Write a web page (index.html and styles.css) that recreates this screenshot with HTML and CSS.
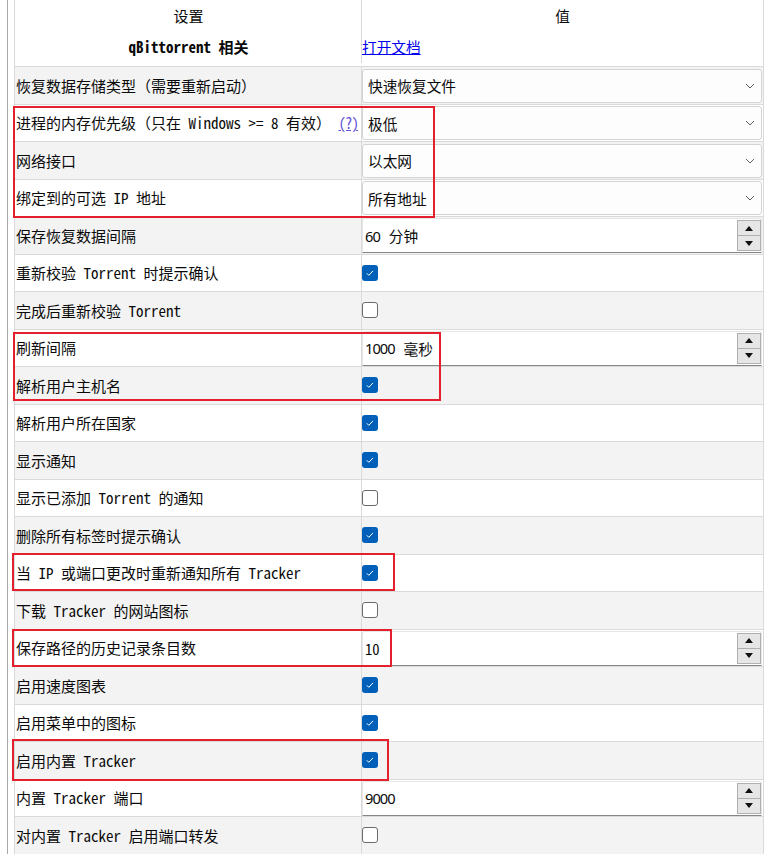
FILE: index.html
```html
<!DOCTYPE html>
<html lang="zh-CN">
  <head>
    <meta charset="UTF-8" />
    <title>高级设置</title>
    <link rel="stylesheet" href="styles.css">
  </head>
  <body>
    <div class="frame">
      <div class="grid">
        <div class="row head">
          <div class="cell key center">设置</div>
          <div class="cell val center">值</div>
        </div>
        <div class="row group">
          <div class="cell key center bold">qBittorrent 相关</div>
          <div class="cell val"><a href="#" class="doc">打开文档</a></div>
        </div>

        <div class="row alt">
          <div class="cell key">恢复数据存储类型（需要重新启动）</div>
          <div class="cell val"><div class="combo"><span>快速恢复文件</span><svg class="chev" width="10" height="6" viewBox="0 0 10 6"><path d="M1 1l4 4 4-4" /></svg></div></div>
        </div>
        <div class="row">
          <div class="cell key">进程的内存优先级（只在 Windows &gt;= 8 有效）&nbsp;<a href="#" class="help">(?)</a></div>
          <div class="cell val"><div class="combo"><span>极低</span><svg class="chev" width="10" height="6" viewBox="0 0 10 6"><path d="M1 1l4 4 4-4" /></svg></div></div>
        </div>
        <div class="row alt">
          <div class="cell key">网络接口</div>
          <div class="cell val"><div class="combo"><span>以太网</span><svg class="chev" width="10" height="6" viewBox="0 0 10 6"><path d="M1 1l4 4 4-4" /></svg></div></div>
        </div>
        <div class="row">
          <div class="cell key">绑定到的可选 IP 地址</div>
          <div class="cell val"><div class="combo"><span>所有地址</span><svg class="chev" width="10" height="6" viewBox="0 0 10 6"><path d="M1 1l4 4 4-4" /></svg></div></div>
        </div>
        <div class="row alt">
          <div class="cell key">保存恢复数据间隔</div>
          <div class="cell val">
            <div class="spin">
              <span class="num">60</span><span class="unit">分钟</span>
              <div class="arrows">
                <span class="btn"><svg width="8" height="5" viewBox="0 0 8 5"><path d="M0 5L4 0 8 5z" /></svg></span>
                <span class="btn"><svg width="8" height="5" viewBox="0 0 8 5"><path d="M0 0h8L4 5z" /></svg></span>
              </div>
            </div>
          </div>
        </div>
        <div class="row">
          <div class="cell key">重新校验 Torrent 时提示确认</div>
          <div class="cell val"><span class="check on"><svg width="16" height="16" viewBox="0 0 16 16"><path d="M4.8 8.3l2 2 4.2-4.4" /></svg></span></div>
        </div>
        <div class="row alt">
          <div class="cell key">完成后重新校验 Torrent</div>
          <div class="cell val"><span class="check"></span></div>
        </div>
        <div class="row">
          <div class="cell key">刷新间隔</div>
          <div class="cell val">
            <div class="spin">
              <span class="num">1000</span><span class="unit">毫秒</span>
              <div class="arrows">
                <span class="btn"><svg width="8" height="5" viewBox="0 0 8 5"><path d="M0 5L4 0 8 5z" /></svg></span>
                <span class="btn"><svg width="8" height="5" viewBox="0 0 8 5"><path d="M0 0h8L4 5z" /></svg></span>
              </div>
            </div>
          </div>
        </div>
        <div class="row alt">
          <div class="cell key">解析用户主机名</div>
          <div class="cell val"><span class="check on"><svg width="16" height="16" viewBox="0 0 16 16"><path d="M4.8 8.3l2 2 4.2-4.4" /></svg></span></div>
        </div>
        <div class="row">
          <div class="cell key">解析用户所在国家</div>
          <div class="cell val"><span class="check on"><svg width="16" height="16" viewBox="0 0 16 16"><path d="M4.8 8.3l2 2 4.2-4.4" /></svg></span></div>
        </div>
        <div class="row alt">
          <div class="cell key">显示通知</div>
          <div class="cell val"><span class="check on"><svg width="16" height="16" viewBox="0 0 16 16"><path d="M4.8 8.3l2 2 4.2-4.4" /></svg></span></div>
        </div>
        <div class="row">
          <div class="cell key">显示已添加 Torrent 的通知</div>
          <div class="cell val"><span class="check"></span></div>
        </div>
        <div class="row alt">
          <div class="cell key">删除所有标签时提示确认</div>
          <div class="cell val"><span class="check on"><svg width="16" height="16" viewBox="0 0 16 16"><path d="M4.8 8.3l2 2 4.2-4.4" /></svg></span></div>
        </div>
        <div class="row">
          <div class="cell key">当 IP 或端口更改时重新通知所有 Tracker</div>
          <div class="cell val"><span class="check on"><svg width="16" height="16" viewBox="0 0 16 16"><path d="M4.8 8.3l2 2 4.2-4.4" /></svg></span></div>
        </div>
        <div class="row alt">
          <div class="cell key">下载 Tracker 的网站图标</div>
          <div class="cell val"><span class="check"></span></div>
        </div>
        <div class="row">
          <div class="cell key">保存路径的历史记录条目数</div>
          <div class="cell val">
            <div class="spin">
              <span class="mono">10</span>
              <div class="arrows">
                <span class="btn"><svg width="8" height="5" viewBox="0 0 8 5"><path d="M0 5L4 0 8 5z" /></svg></span>
                <span class="btn"><svg width="8" height="5" viewBox="0 0 8 5"><path d="M0 0h8L4 5z" /></svg></span>
              </div>
            </div>
          </div>
        </div>
        <div class="row alt">
          <div class="cell key">启用速度图表</div>
          <div class="cell val"><span class="check on"><svg width="16" height="16" viewBox="0 0 16 16"><path d="M4.8 8.3l2 2 4.2-4.4" /></svg></span></div>
        </div>
        <div class="row">
          <div class="cell key">启用菜单中的图标</div>
          <div class="cell val"><span class="check on"><svg width="16" height="16" viewBox="0 0 16 16"><path d="M4.8 8.3l2 2 4.2-4.4" /></svg></span></div>
        </div>
        <div class="row alt">
          <div class="cell key">启用内置 Tracker</div>
          <div class="cell val"><span class="check on"><svg width="16" height="16" viewBox="0 0 16 16"><path d="M4.8 8.3l2 2 4.2-4.4" /></svg></span></div>
        </div>
        <div class="row">
          <div class="cell key">内置 Tracker 端口</div>
          <div class="cell val">
            <div class="spin">
              <span class="num">9000</span>
              <div class="arrows">
                <span class="btn"><svg width="8" height="5" viewBox="0 0 8 5"><path d="M0 5L4 0 8 5z" /></svg></span>
                <span class="btn"><svg width="8" height="5" viewBox="0 0 8 5"><path d="M0 0h8L4 5z" /></svg></span>
              </div>
            </div>
          </div>
        </div>
        <div class="row alt">
          <div class="cell key">对内置 Tracker 启用端口转发</div>
          <div class="cell val"><span class="check"></span></div>
        </div>
      </div>
    </div>

    <!-- red annotation boxes -->
    <div class="mark mark-memory"></div>
    <div class="mark mark-refresh"></div>
    <div class="mark mark-announce"></div>
    <div class="mark mark-history"></div>
    <div class="mark mark-tracker"></div>
  </body>
</html>
```

FILE: styles.css
```css
html,
body {
  margin: 0;
  background: #fff;
}
body {
  position: relative;
  height: 854px;
  overflow: hidden;
  font-family: "Noto Sans Mono CJK SC", "Noto Sans CJK SC", "Liberation Mono", monospace;
  font-size: 14.67px;
  color: #0a0a0a;
}
.frame {
  margin-left: 7px;
  padding-left: 6px;
  height: 854px;
  border-left: 1px solid #a9a9a9;
}
.grid {
  width: 748px;
  border-left: 1px solid #dadada;
  border-right: 1px solid #dadada;
}
.row {
  display: grid;
  grid-template-columns: 347px 1fr;
  height: 37.5px;
  box-sizing: border-box;
  border-bottom: 1px solid #dadada;
}
.row.alt {
  background: #f3f3f3;
}
.row.head {
  height: 30px;
  border-bottom: none;
}
.row.group {
  height: 37px;
  padding-bottom: 3px;
}
.cell {
  display: flex;
  align-items: center;
  min-width: 0;
  white-space: nowrap;
}
.key {
  padding-left: 1px;
  border-right: 1px solid #dadada;
  font-size: 15px;
}
.center {
  justify-content: center;
}
.bold {
  font-weight: bold;
}
.doc {
  color: #0000ee;
  font-family: "Noto Sans CJK SC", sans-serif;
}
.help {
  color: #6352d6;
  letter-spacing: -1px;
}
.combo {
  flex: 1;
  display: flex;
  align-items: center;
  height: 34px;
  margin: 1px 1px 0 0;
  padding: 0 6px 0 5px;
  box-sizing: border-box;
  background: #fdfdfd;
  border: 1px solid #d4d4d4;
  border-radius: 3px;
  font-family: "Noto Sans CJK SC", sans-serif;
}
.chev {
  margin-left: auto;
  fill: none;
  stroke: #606060;
  stroke-width: 1;
}
.spin {
  flex: 1;
  display: flex;
  align-items: center;
  height: 35px;
  margin: 1px 1px 0 0;
  padding-left: 2px;
  box-sizing: border-box;
  background: #fff;
  border: 1px solid #e6e6e6;
  border-bottom-color: #868686;
  border-radius: 3px 3px 0 0;
}
.num {
  font-family: "Noto Sans", sans-serif;
  letter-spacing: -1px;
}
.unit {
  margin-left: 9px;
  font-family: "Noto Sans CJK SC", sans-serif;
}
.mono {
  font-family: "Noto Sans Mono CJK SC", "Liberation Mono", monospace;
}
.arrows {
  margin-left: auto;
  display: flex;
  flex-direction: column;
  align-self: flex-start;
  margin-top: 1px;
}
.btn {
  display: flex;
  align-items: center;
  justify-content: center;
  width: 22px;
  height: 14px;
  background: #e6e6e6;
  border: 1px solid #b0b0b0;
}
.btn + .btn {
  border-top: none;
}
.btn path {
  fill: #111;
}
.check {
  width: 16px;
  height: 16px;
  box-sizing: border-box;
  border: 1px solid #6b6b6b;
  border-radius: 3px;
  background: #fff;
}
.check.on {
  border: none;
  background: #005fb8;
}
.check svg {
  display: block;
  fill: none;
  stroke: #fff;
  stroke-width: 1;
}
.mark {
  position: absolute;
  border: 2px solid #e5202e;
  box-sizing: border-box;
}
.mark-memory {
  left: 13px;
  top: 106px;
  width: 422px;
  height: 112px;
}
.mark-refresh {
  left: 13px;
  top: 332px;
  width: 428px;
  height: 69px;
}
.mark-announce {
  left: 12px;
  top: 553px;
  width: 383px;
  height: 38px;
}
.mark-history {
  left: 12px;
  top: 629px;
  width: 380px;
  height: 38px;
}
.mark-tracker {
  left: 12px;
  top: 739px;
  width: 377px;
  height: 42px;
}
```
